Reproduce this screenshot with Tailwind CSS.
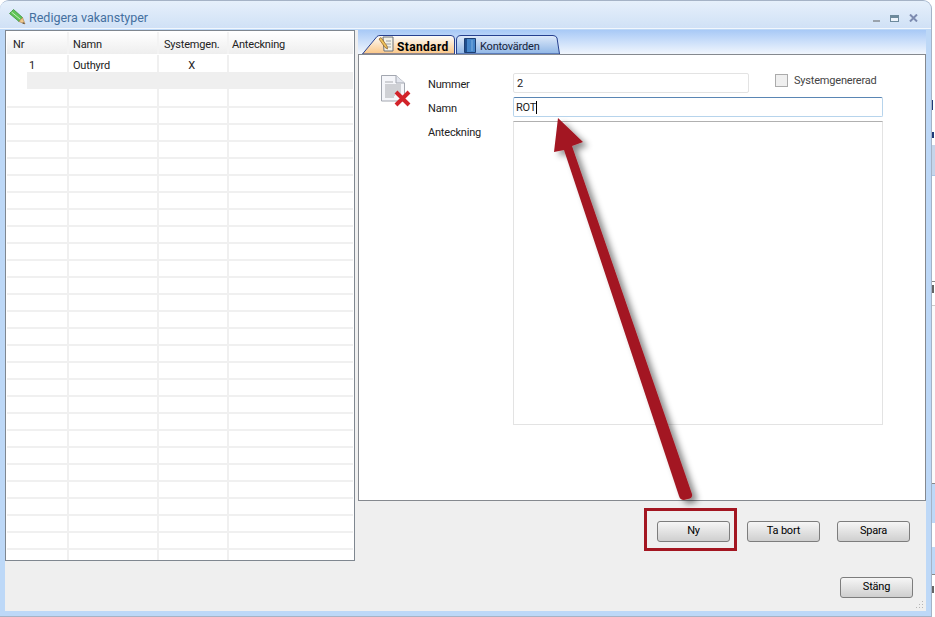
<!DOCTYPE html>
<html lang="en">
<head>
    <meta charset="UTF-8">
    <title>Redigera vakanstyper</title>
    <script src="https://cdn.jsdelivr.net/npm/@tailwindcss/browser@4"></script>
</head>
<body class="bg-white overflow-hidden">
    <div class="relative flex w-[935px] h-[617px] font-['Roboto',sans-serif] text-[11px] tracking-[-0.2px] text-[#222]">
        <!-- Window -->
        <div class="w-[932px] h-[617px] flex flex-col bg-[#bdd8f7] rounded-t-[9px] border-t border-r border-b border-[#a5b3c6] overflow-hidden">
            <!-- Title bar -->
            <div class="h-[28px] shrink-0 flex items-center pl-[9px] pr-[13px] pt-[7px] bg-gradient-to-b from-[#e6f0fb] to-[#d0e1f6] border-b border-[#f2f7fd]">
                <svg width="17" height="16" viewBox="0 0 17 16" class="mr-[3px] -mt-[3px]">
                    <path d="M.5 4.5 L4.5 .5 L13.5 8.5 L10 12.5 Z" fill="#5fc456" stroke="#3c8f3c" stroke-width=".8"/>
                    <path d="M2.5 3 L11.5 10.5" stroke="#c4eebb" stroke-width="1"/>
                    <path d="M10 12.5 L13.5 8.5 L16 15 Z" fill="#f0c98d" stroke="#a9793f" stroke-width=".6"/>
                    <path d="M14 13 L16 15 L13.5 14.4 Z" fill="#444"/>
                </svg>
                <span class="text-[12.5px] tracking-normal text-[#44709f]">Redigera vakanstyper</span>
                <div class="ml-auto flex items-center gap-[10px]">
                    <div class="w-[7px] h-[2px] mt-[6px] bg-[#9aa3ad]"></div>
                    <div class="w-[9px] h-[7px] border border-[#6d8a9c] border-t-[3px] bg-[#eef4fb]"></div>
                    <svg width="9" height="8" viewBox="0 0 9 8"><path d="M1 .5 L8 7.5 M8 .5 L1 7.5" stroke="#7d8bb0" stroke-width="2"/></svg>
                </div>
            </div>

            <!-- Body -->
            <div class="flex-1 flex flex-col ml-[5px] mr-[5px] mt-px mb-[5px] bg-[#efefef] relative">
                <div class="flex items-start">
                    <!-- Type list -->
                    <div class="w-[350px] h-[531px] bg-white border border-[#7f8790] p-px overflow-hidden shrink-0">
                        <div class="flex h-[23px] bg-gradient-to-b from-white to-[#eeeeee] border-b border-white">
                            <div class="w-[62px] pl-[6px] leading-[25px] border-r-2 border-[#f3f3f3]">Nr</div>
                            <div class="w-[90px] pl-[4px] leading-[25px] border-r-2 border-[#f3f3f3]">Namn</div>
                            <div class="w-[70px] pl-[5px] leading-[25px] border-r-2 border-[#f3f3f3]">Systemgen.</div>
                            <div class="flex-1 pl-[3px] leading-[25px]">Anteckning</div>
                        </div>
                        <div class="flex h-[17px] leading-[21px]">
                            <div class="w-[62px] pl-[22px] border-r-2 border-[#f0f0f0]">1</div>
                            <div class="w-[90px] pl-[4px] border-r-2 border-[#f0f0f0]">Outhyrd</div>
                            <div class="w-[70px] pr-[3px] text-center border-r-2 border-[#f0f0f0]">X</div>
                            <div class="flex-1"></div>
                        </div>
                        <div class="flex h-[17px]">
                            <div class="w-[20px] bg-white"></div>
                            <div class="flex-1 bg-[#efefef]"></div>
                        </div>
                        <div id="rows"></div>
                    </div>

                    <!-- Detail side -->
                    <div class="w-[568px] ml-[3px] shrink-0">
                        <!-- Tab strip -->
                        <div class="relative h-[24px] bg-gradient-to-b from-[#a8c9f6] to-[#f1f6fd]">
                            <div class="absolute left-[4px] top-[5px] w-[94px] h-[19px]">
                                <svg class="absolute inset-0" width="94" height="19" viewBox="0 0 94 19">
                                    <defs>
                                        <linearGradient id="tabOn" x1="0" y1="0" x2="0" y2="1"><stop offset="0" stop-color="#fdfdfd"/><stop offset="1" stop-color="#fbc685"/></linearGradient>
                                        <linearGradient id="tabOff" x1="0" y1="0" x2="0" y2="1"><stop offset="0" stop-color="#dfeafa"/><stop offset="1" stop-color="#8fb6e6"/></linearGradient>
                                    </defs>
                                    <path d="M.5 19 L15 1.5 Q16 .5 18 .5 L89 .5 Q92.5 .5 92.5 4 L92.5 19 Z" fill="url(#tabOn)" stroke="#27408f"/>
                                </svg>
                                <svg class="absolute left-[16px] top-[1px]" width="17" height="17" viewBox="0 0 17 17">
                                    <path d="M5 1 H15 V15 H6 Z" fill="#f4f2e6" stroke="#6d7078"/>
                                    <path d="M8 5 H13 M8 8 H13 M8 11 H13" stroke="#9ba0a8"/>
                                    <path d="M1 3 L3 1.5 L9 10 L9.5 13 L7 11.5 Z" fill="#eec25b" stroke="#8a5a20" stroke-width=".7"/>
                                </svg>
                                <span class="absolute left-[35px] top-[3px] font-bold text-[12px] tracking-[0.35px] text-black">Standard</span>
                            </div>
                            <div class="absolute left-[98px] top-[5px] w-[104px] h-[19px]">
                                <svg class="absolute inset-0" width="104" height="19" viewBox="0 0 104 19">
                                    <path d="M.5 19 L.5 5 Q.5 .5 5 .5 L97 .5 Q100 .5 101 3 L103.5 19 Z" fill="url(#tabOff)" stroke="#27408f"/>
                                </svg>
                                <svg class="absolute left-[7px] top-[3px]" width="14" height="16" viewBox="0 0 14 16">
                                    <path d="M1.5 .5 H12.5 V14.5 H1.5 Z" fill="#4585c9" stroke="#1d3f74"/>
                                    <path d="M2 1 H4 V14 H2 Z" fill="#1f4f8f"/>
                                    <path d="M9 2 V13" stroke="#7fb0e3"/>
                                </svg>
                                <span class="absolute left-[24px] top-[4px] text-[#16233a]">Kontovärden</span>
                            </div>
                        </div>

                        <!-- Tab page -->
                        <div class="h-[447px] bg-white border border-[#85898f] flex pt-[18px]">
                            <svg class="ml-[21px] mt-[2px] shrink-0" width="32" height="32" viewBox="0 0 32 32">
                                <path d="M1.5 .5 H16 L24.5 8 V26 H1.5 Z" fill="#f5f6fa" stroke="#a3a7b0"/>
                                <path d="M16 .5 V8 H24.5" fill="#e3e6ee" stroke="#a3a7b0"/>
                                <path d="M5 7 H13 M5 10 H21 M5 12 H21 M5 14 H21 M5 16 H21 M5 18 H21 M5 20 H15 M5 22 H14" stroke="#a9abb0"/>
                                <path d="M16 17 L29 30 M29 17 L16 30" stroke="#d2232a" stroke-width="4"/>
                            </svg>
                            <div class="ml-[16px] w-[85px] shrink-0">
                                <div class="h-[20px] leading-[24px]">Nummer</div>
                                <div class="h-[20px] mt-[4px] leading-[24px]">Namn</div>
                                <div class="h-[20px] mt-[4px] leading-[24px]">Anteckning</div>
                            </div>
                            <div class="w-[370px] shrink-0">
                                <div class="flex items-start">
                                    <div class="w-[236px] h-[20px] border border-[#e3e3e3] rounded-[2px] pl-[3px] leading-[20px]">2</div>
                                    <div class="ml-[26px] mt-px w-[13px] h-[13px] border border-[#ababab] bg-[#efefef]"></div>
                                    <span class="ml-[6px] leading-[16px] text-[#444] whitespace-nowrap">Systemgenererad</span>
                                </div>
                                <div class="h-[20px] mt-[4px] border border-[#b7d4ec] border-t-[#5a86b4] rounded-[2px] pl-[2px] leading-[19px] flex items-center">ROT<span class="w-px h-[13px] bg-black"></span></div>
                                <div class="h-[304px] mt-[4px] border border-[#e3e3e3] border-t-[#b0b0b0]"></div>
                            </div>
                        </div>

                        <!-- Actions -->
                        <div class="flex justify-end gap-[17px] pr-[16px] pt-[20px]">
                            <button class="w-[73px] h-[21px] rounded-[3px] border border-[#7d7d7d] bg-gradient-to-b from-[#f6f6f6] to-[#cfcfcf] text-black">Ny</button>
                            <button class="w-[73px] h-[21px] rounded-[3px] border border-[#7d7d7d] bg-gradient-to-b from-[#f6f6f6] to-[#cfcfcf] text-black">Ta bort</button>
                            <button class="w-[73px] h-[21px] rounded-[3px] border border-[#7d7d7d] bg-gradient-to-b from-[#f6f6f6] to-[#cfcfcf] text-black">Spara</button>
                        </div>
                    </div>
                </div>

                <!-- Close row -->
                <div class="flex justify-end pr-[13px] mt-[16px]">
                    <button class="w-[73px] h-[21px] rounded-[3px] border border-[#7d7d7d] bg-gradient-to-b from-[#f6f6f6] to-[#cfcfcf] text-black">Stäng</button>
                </div>

                <!-- Resize grip -->
                <svg class="absolute right-[2px] bottom-[2px]" width="9" height="9" viewBox="0 0 9 9" fill="#b5b5b5">
                    <rect x="7" y="1" width="1" height="1"/><rect x="4" y="4" width="1" height="1"/><rect x="7" y="4" width="1" height="1"/>
                    <rect x="1" y="7" width="1" height="1"/><rect x="4" y="7" width="1" height="1"/><rect x="7" y="7" width="1" height="1"/>
                </svg>
            </div>
        </div>

        <!-- Sliver of the window behind -->
        <div class="w-[3px] h-[617px] flex flex-col shrink-0">
            <div class="h-[100px] bg-white"></div>
            <div class="h-[10px] w-px bg-[#1f3a78]"></div>
            <div class="h-[22px]"></div>
            <div class="h-[6px] w-[2px] bg-[#1f3a78]"></div>
            <div class="h-[7px]"></div>
            <div class="h-[31px] bg-[#c5d5ea] border-b border-[#a9c4e6]"></div>
            <div class="h-[106px] border-b border-[#888]"></div>
            <div class="h-[3px]"></div>
            <div class="h-[8px] w-[2px] bg-[#666]"></div>
            <div class="h-[13px] border-b border-[#ccc]"></div>
            <div class="h-[177px] bg-[#fbfbfb]"></div>
            <div class="h-[40px] bg-[#bdd8f7] border-t border-[#888]"></div>
            <div class="h-[24px] bg-white"></div>
            <div class="h-[28px] bg-[#bdd8f7] border-b border-[#888]"></div>
            <div class="h-[11px]"></div>
            <div class="h-[7px] w-[2px] bg-[#666]"></div>
            <div class="flex-1 bg-white"></div>
        </div>

        <!-- Annotation: red box around Ny -->
        <div class="absolute left-[644px] top-[508px] w-[93px] h-[43px] border-[3px] border-[#a31621]"></div>

        <!-- Annotation: arrow from Ny up to Namn -->
        <svg class="absolute left-0 top-0 pointer-events-none" width="935" height="617" viewBox="0 0 935 617">
            <defs>
                <filter id="arrowShadow" x="-30%" y="-10%" width="160%" height="120%">
                    <feDropShadow dx="5" dy="4" stdDeviation="3" flood-color="#000" flood-opacity=".45"/>
                </filter>
            </defs>
            <path d="M558 118 L583 142 L572 146 L692 494 Q693 498 688 499 L684 500 Q680 500 679 496 L564 150 L554 152 Z" fill="#a31621" filter="url(#arrowShadow)"/>
        </svg>
    </div>

    <script>
        // empty grid rows under the two fixed ones, the first is 2px taller
        const rows = document.getElementById('rows');
        let html = '';
        for (let i = 0; i < 28; i++) {
            html += `
                <div class="flex ${i === 0 ? 'h-[19px]' : 'h-[17px]'} border-b-2 border-[#f0f0f0]">
                    <div class="w-[62px] border-r-2 border-[#f0f0f0]"></div>
                    <div class="w-[90px] border-r-2 border-[#f0f0f0]"></div>
                    <div class="w-[70px] border-r-2 border-[#f0f0f0]"></div>
                    <div class="flex-1"></div>
                </div>`;
        }
        rows.innerHTML = html;
    </script>
</body>
</html>
